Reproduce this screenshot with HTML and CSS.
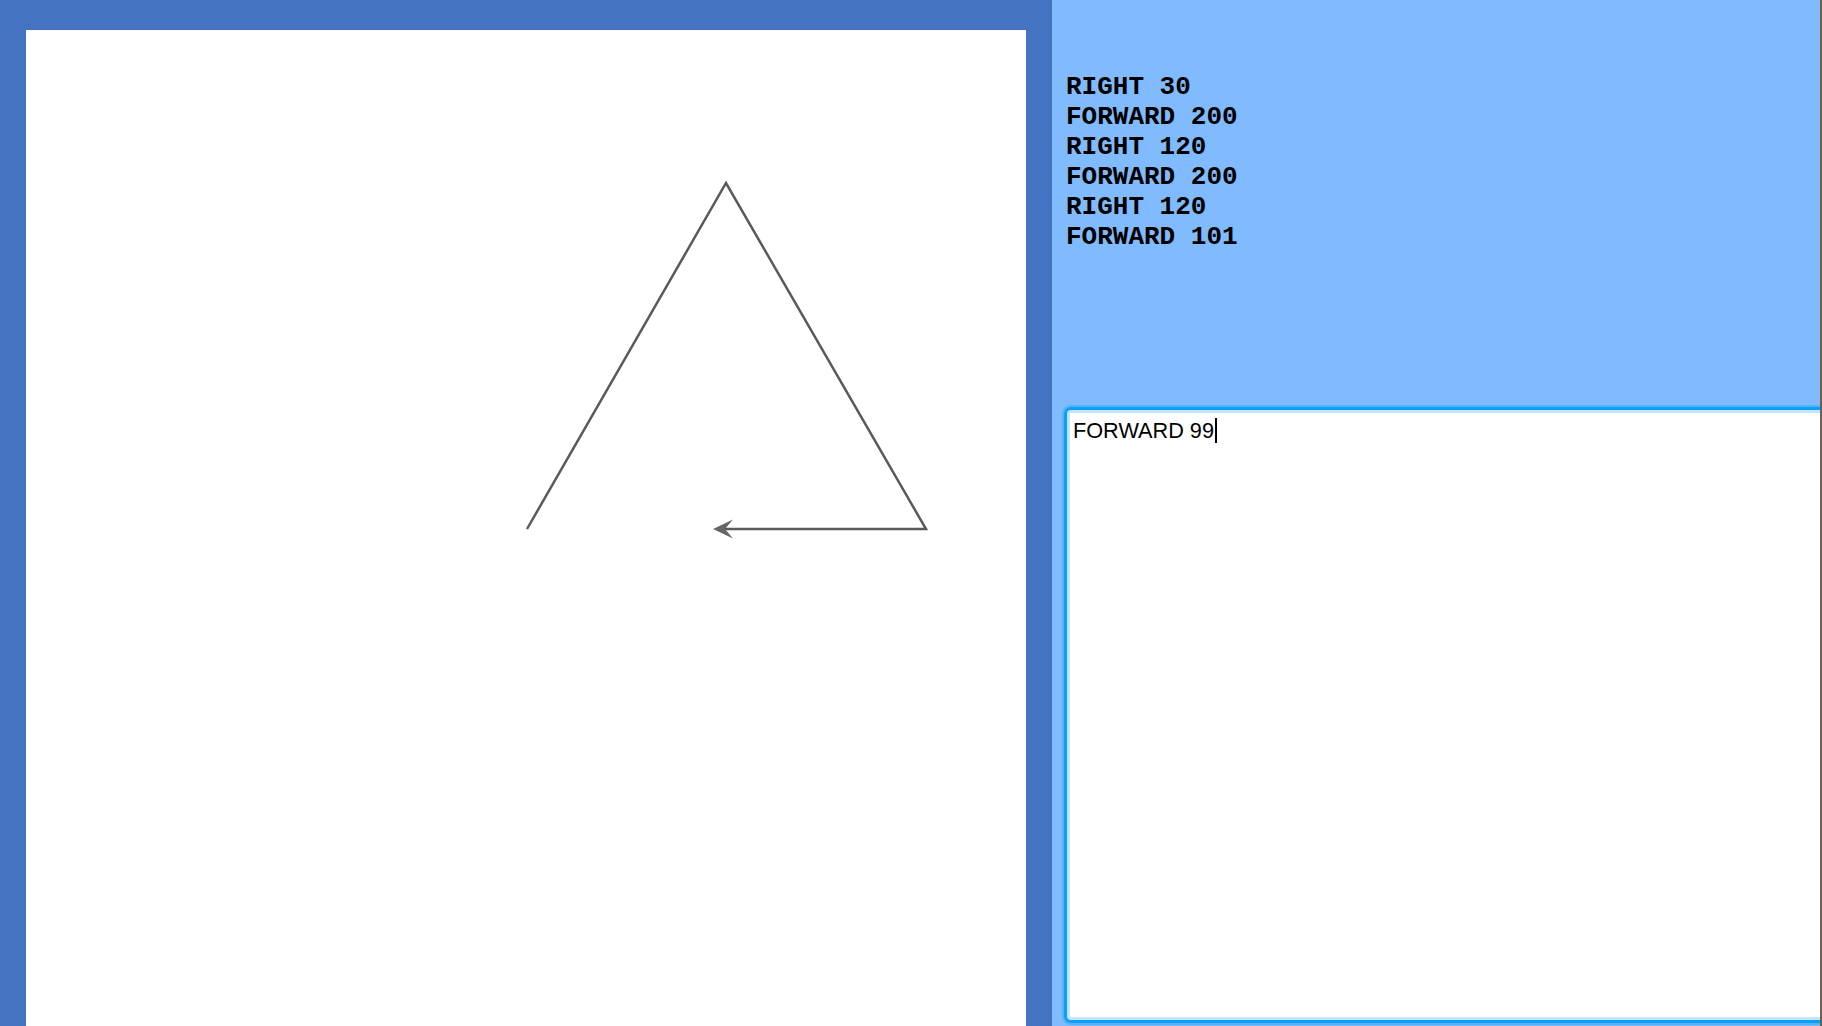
FILE: index.html
```html
<!DOCTYPE html>
<html>
<head>
<meta charset="utf-8">
<link rel="stylesheet" href="styles.css">
</head>
<body>
<div class="app">
  <div class="stage">
    <div class="canvas">
      <svg width="1000" height="1000" viewBox="0 0 1000 1000">
        <polyline points="501,499 700,153 900,499 698,499" fill="none" stroke="#5a5a5a" stroke-width="2.5" stroke-linejoin="miter"/>
        <polygon points="687,499 707,489.5 699,499 707,508.5" fill="#666"/>
      </svg>
    </div>
  </div>
  <div class="side">
<pre class="history">RIGHT 30
FORWARD 200
RIGHT 120
FORWARD 200
RIGHT 120
FORWARD 101</pre>
    <div class="input"><span class="typed">FORWARD 99</span><span class="caret"></span></div>
  </div>
</div>
</body>
</html>
```

FILE: styles.css
```css
html, body {
  margin: 0;
  padding: 0;
  width: 1822px;
  height: 1026px;
  overflow: hidden;
}
.app {
  display: flex;
  width: 1822px;
  height: 1026px;
}
.stage {
  width: 1000px;
  flex: none;
  background: #4473c2;
  padding: 30px 26px 0 26px;
  overflow: hidden;
}
.canvas {
  width: 1000px;
  height: 1000px;
  background: #fff;
}
.canvas svg {
  display: block;
}
.side {
  flex: 1;
  background: #80bbff;
  border-right: 2px solid #6c5f54;
  overflow: hidden;
  display: flex;
  flex-direction: column;
}
.history {
  margin: 72px 0 0 14px;
  font-family: "Liberation Mono", "Courier New", monospace;
  font-weight: bold;
  font-size: 26px;
  line-height: 30px;
  color: #000;
}
.input {
  flex: none;
  margin: 158px 0 0 15px;
  width: 900px;
  height: 596px;
  background: #fff;
  border: 3px solid #c4e4fc;
  border-radius: 4px;
  box-shadow: 0 0 0 3px #0aa0fa, 0 0 0 5px #58b3f6;
  padding: 5px 3px 3px 3px;
  font-family: "Liberation Sans", Arial, sans-serif;
  font-size: 21.7px;
  line-height: 26px;
  color: #000;
}
.caret {
  display: inline-block;
  width: 2px;
  height: 25px;
  background: #000;
  vertical-align: -5px;
  margin-left: 1px;
}
```
